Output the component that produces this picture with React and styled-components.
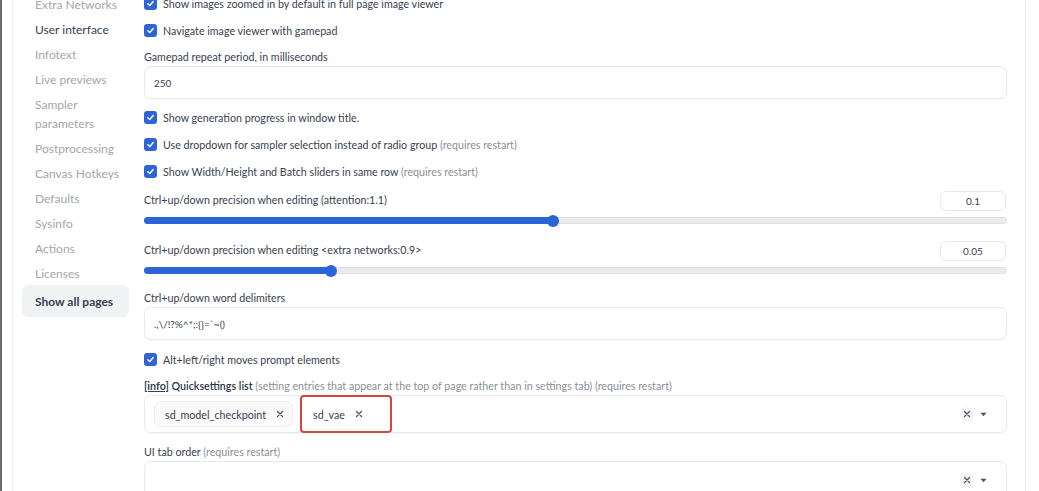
import React from "react";
import styled, { createGlobalStyle } from "styled-components";

const Global = createGlobalStyle`
  html, body { margin: 0; padding: 0; background: #fff; }
  body { font-family: Lato, "Noto Sans", sans-serif; color: #374151; overflow: hidden; }
  * { box-sizing: border-box; }
`;

const Page = styled.div`
  display: flex;
  width: 1039px;
  height: 491px;
  overflow: hidden;
  border-left: 2px solid #6b6b6b;
`;

const Frame = styled.div`
  display: flex;
  margin-left: 10px;
  width: 1014px;
  height: 100%;
  border-left: 1px solid #efefef;
  border-right: 1px solid #ececec;
`;

const Sidebar = styled.nav`
  width: 131px;
  flex-shrink: 0;
  display: flex;
  flex-direction: column;
  padding-left: 9px;
  margin-top: -8px;
  & > * { flex-shrink: 0; }
`;

const NavItem = styled.div`
  font-size: 12px;
  line-height: 19px;
  padding: 3px 0 3px 13px;
  color: ${(p) => (p.$active ? "#374151" : "#a3a7ae")};
  width: 107px;
  ${(p) =>
    p.$all &&
    `
    margin-top: -1px;
    font-weight: 700;
    color: #374151;
    background: #f1f2f4;
    border-radius: 6px;
    padding: 7px 0 6px 13px;
  `}
`;

const Main = styled.main`
  width: 863px;
  display: flex;
  flex-direction: column;
  margin-top: -10px;
  & > * { flex-shrink: 0; }
`;

const CheckRow = styled.label`
  display: flex;
  align-items: center;
  gap: 6px;
  height: 27px;
  font-size: 10.7px;
  color: #374151;
`;

const Box = styled.span`
  width: 13px;
  height: 13px;
  border-radius: 3px;
  background: #2f64d8;
  display: inline-flex;
  align-items: center;
  justify-content: center;
  flex-shrink: 0;
`;

const Muted = styled.span`
  color: #8a8f98;
`;

const FieldLabel = styled.div`
  font-size: 10.7px;
  line-height: 18px;
  height: 18px;
  color: #374151;
  margin-top: ${(p) => p.$mt || 0}px;
`;

const TextInput = styled.div`
  height: 33px;
  border: 1px solid #e7e8eb;
  border-radius: 7px;
  box-shadow: 0 1px 2px rgba(0, 0, 0, 0.04);
  display: flex;
  align-items: center;
  padding-left: 9px;
  font-size: 10px;
  color: #374151;
  margin-bottom: ${(p) => p.$mb || 6}px;
`;

const SliderField = styled.div`
  height: 50px;
  display: flex;
  flex-direction: column;
  padding-top: 6px;
`;

const SliderHead = styled.div`
  display: flex;
  justify-content: space-between;
  align-items: flex-start;
  height: 23px;
`;

const SliderLabel = styled.span`
  font-size: 10.7px;
  line-height: 18px;
`;

const NumberBox = styled.div`
  width: 66px;
  height: 20px;
  margin-right: 1px;
  border: 1px solid #e7e8eb;
  border-radius: 6px;
  font-size: 10px;
  display: flex;
  align-items: center;
  justify-content: center;
  color: #374151;
`;

const Track = styled.div`
  position: relative;
  height: 7px;
  margin-top: 3px;
  border-radius: 4px;
  border: 1px solid #dcdde0;
  background: #ececee;
`;

const Fill = styled.div`
  position: absolute;
  left: -1px;
  top: -1px;
  height: 7px;
  border-radius: 4px;
  background: #2a64d6;
`;

const Thumb = styled.div`
  position: absolute;
  top: -3.5px;
  width: 12px;
  height: 12px;
  margin-left: -6px;
  border-radius: 50%;
  background: #2a64d6;
`;

const Info = styled.span`
  font-weight: 700;
  text-decoration: underline;
  color: #374151;
`;

const Strong = styled.span`
  color: #2f3744;
  font-weight: 600;
`;

const MultiBox = styled.div`
  height: 38px;
  border: 1px solid #e7e8eb;
  border-radius: 7px;
  box-shadow: 0 1px 2px rgba(0, 0, 0, 0.04);
  display: flex;
  align-items: center;
  padding-left: 9px;
  padding-right: 19px;
  gap: 7px;
`;

const Chip = styled.span`
  display: inline-flex;
  align-items: center;
  height: 26px;
  padding: 0 ${(p) => (p.$wide ? 26 : 8)}px 0 10px;
  gap: 10px;
  border: 1px solid ${(p) => (p.$plain ? "transparent" : "#eceef1")};
  border-radius: 7px;
  background: ${(p) => (p.$plain ? "transparent" : "#fafafb")};
  font-size: 10.7px;
  color: #374151;
`;

const ChipX = styled.span`
  display: inline-flex;
  color: #6b7280;
`;

const Highlight = styled.span`
  display: inline-flex;
  align-items: center;
  height: 38px;
  border: 2px solid #d2473c;
  border-radius: 4px;
`;

const Spacer = styled.span`
  flex: 1;
`;

const Controls = styled.span`
  display: inline-flex;
  align-items: center;
  gap: 6px;
  color: #4b5563;
`;

const ClearBtn = styled.span`
  width: 14px;
  height: 14px;
  border-radius: 50%;
  background: #f4f4f6;
  display: inline-flex;
  align-items: center;
  justify-content: center;
`;

const Check = () => (
  <Box>
    <svg width="9" height="9" viewBox="0 0 10 10">
      <path d="M2 5.2 L4.2 7.2 L8 2.8" fill="none" stroke="#fff" strokeWidth="1.6" strokeLinecap="round" strokeLinejoin="round" />
    </svg>
  </Box>
);

const XIcon = () => (
  <svg width="8" height="8" viewBox="0 0 8 8">
    <path d="M1.5 1.5 L6.5 6.5 M6.5 1.5 L1.5 6.5" stroke="#4b5563" strokeWidth="1.3" strokeLinecap="round" />
  </svg>
);

const Caret = () => (
  <svg width="7" height="5" viewBox="0 0 7 5">
    <path d="M0.5 0.8 L6.5 0.8 L3.5 4.2 Z" fill="#4b5563" />
  </svg>
);

const CheckItem = ({ children }) => (
  <CheckRow>
    <Check />
    <span>{children}</span>
  </CheckRow>
);

const Slider = ({ label, value, pct }) => (
  <SliderField>
    <SliderHead>
      <SliderLabel>{label}</SliderLabel>
      <NumberBox>{value}</NumberBox>
    </SliderHead>
    <Track>
      <Fill style={{ width: `${pct}%` }} />
      <Thumb style={{ left: `${pct}%` }} />
    </Track>
  </SliderField>
);

const SelectControls = () => (
  <Controls>
    <ClearBtn>
      <XIcon />
    </ClearBtn>
    <Caret />
  </Controls>
);

const navItems = [
  "Extra Networks",
  "User interface",
  "Infotext",
  "Live previews",
  "Sampler parameters",
  "Postprocessing",
  "Canvas Hotkeys",
  "Defaults",
  "Sysinfo",
  "Actions",
  "Licenses",
];

export default function App() {
  return (
    <Page>
      <Global />
      <Frame>
        <Sidebar>
          {navItems.map((n) => (
            <NavItem key={n} $active={n === "User interface"}>
              {n}
            </NavItem>
          ))}
          <NavItem $all>Show all pages</NavItem>
        </Sidebar>
        <Main>
          <CheckItem>Show images zoomed in by default in full page image viewer</CheckItem>
          <CheckItem>Navigate image viewer with gamepad</CheckItem>
          <FieldLabel $mt={4}>Gamepad repeat period, in milliseconds</FieldLabel>
          <TextInput $mb={5}>250</TextInput>
          <CheckItem>Show generation progress in window title.</CheckItem>
          <CheckItem>
            Use dropdown for sampler selection instead of radio group <Muted>(requires restart)</Muted>
          </CheckItem>
          <CheckItem>
            Show Width/Height and Batch sliders in same row <Muted>(requires restart)</Muted>
          </CheckItem>
          <Slider label="Ctrl+up/down precision when editing (attention:1.1)" value="0.1" pct={47.4} />
          <Slider label="Ctrl+up/down precision when editing <extra networks:0.9>" value="0.05" pct={21.6} />
          <FieldLabel $mt={4}>Ctrl+up/down word delimiters</FieldLabel>
          <TextInput $mb={6}>{".,\\/!?%^*;:{}=`~()"}</TextInput>
          <CheckItem>Alt+left/right moves prompt elements</CheckItem>
          <FieldLabel $mt={4}>
            <Info>[info]</Info> <Strong>Quicksettings list</Strong>{" "}
            <Muted>(setting entries that appear at the top of page rather than in settings tab) (requires restart)</Muted>
          </FieldLabel>
          <MultiBox>
            <Chip>
              sd_model_checkpoint
              <ChipX>
                <XIcon />
              </ChipX>
            </Chip>
            <Highlight>
              <Chip $plain $wide>
                sd_vae
                <ChipX>
                  <XIcon />
                </ChipX>
              </Chip>
            </Highlight>
            <Spacer />
            <SelectControls />
          </MultiBox>
          <FieldLabel $mt={10}>
            UI tab order <Muted>(requires restart)</Muted>
          </FieldLabel>
          <MultiBox>
            <Spacer />
            <SelectControls />
          </MultiBox>
        </Main>
      </Frame>
    </Page>
  );
}
